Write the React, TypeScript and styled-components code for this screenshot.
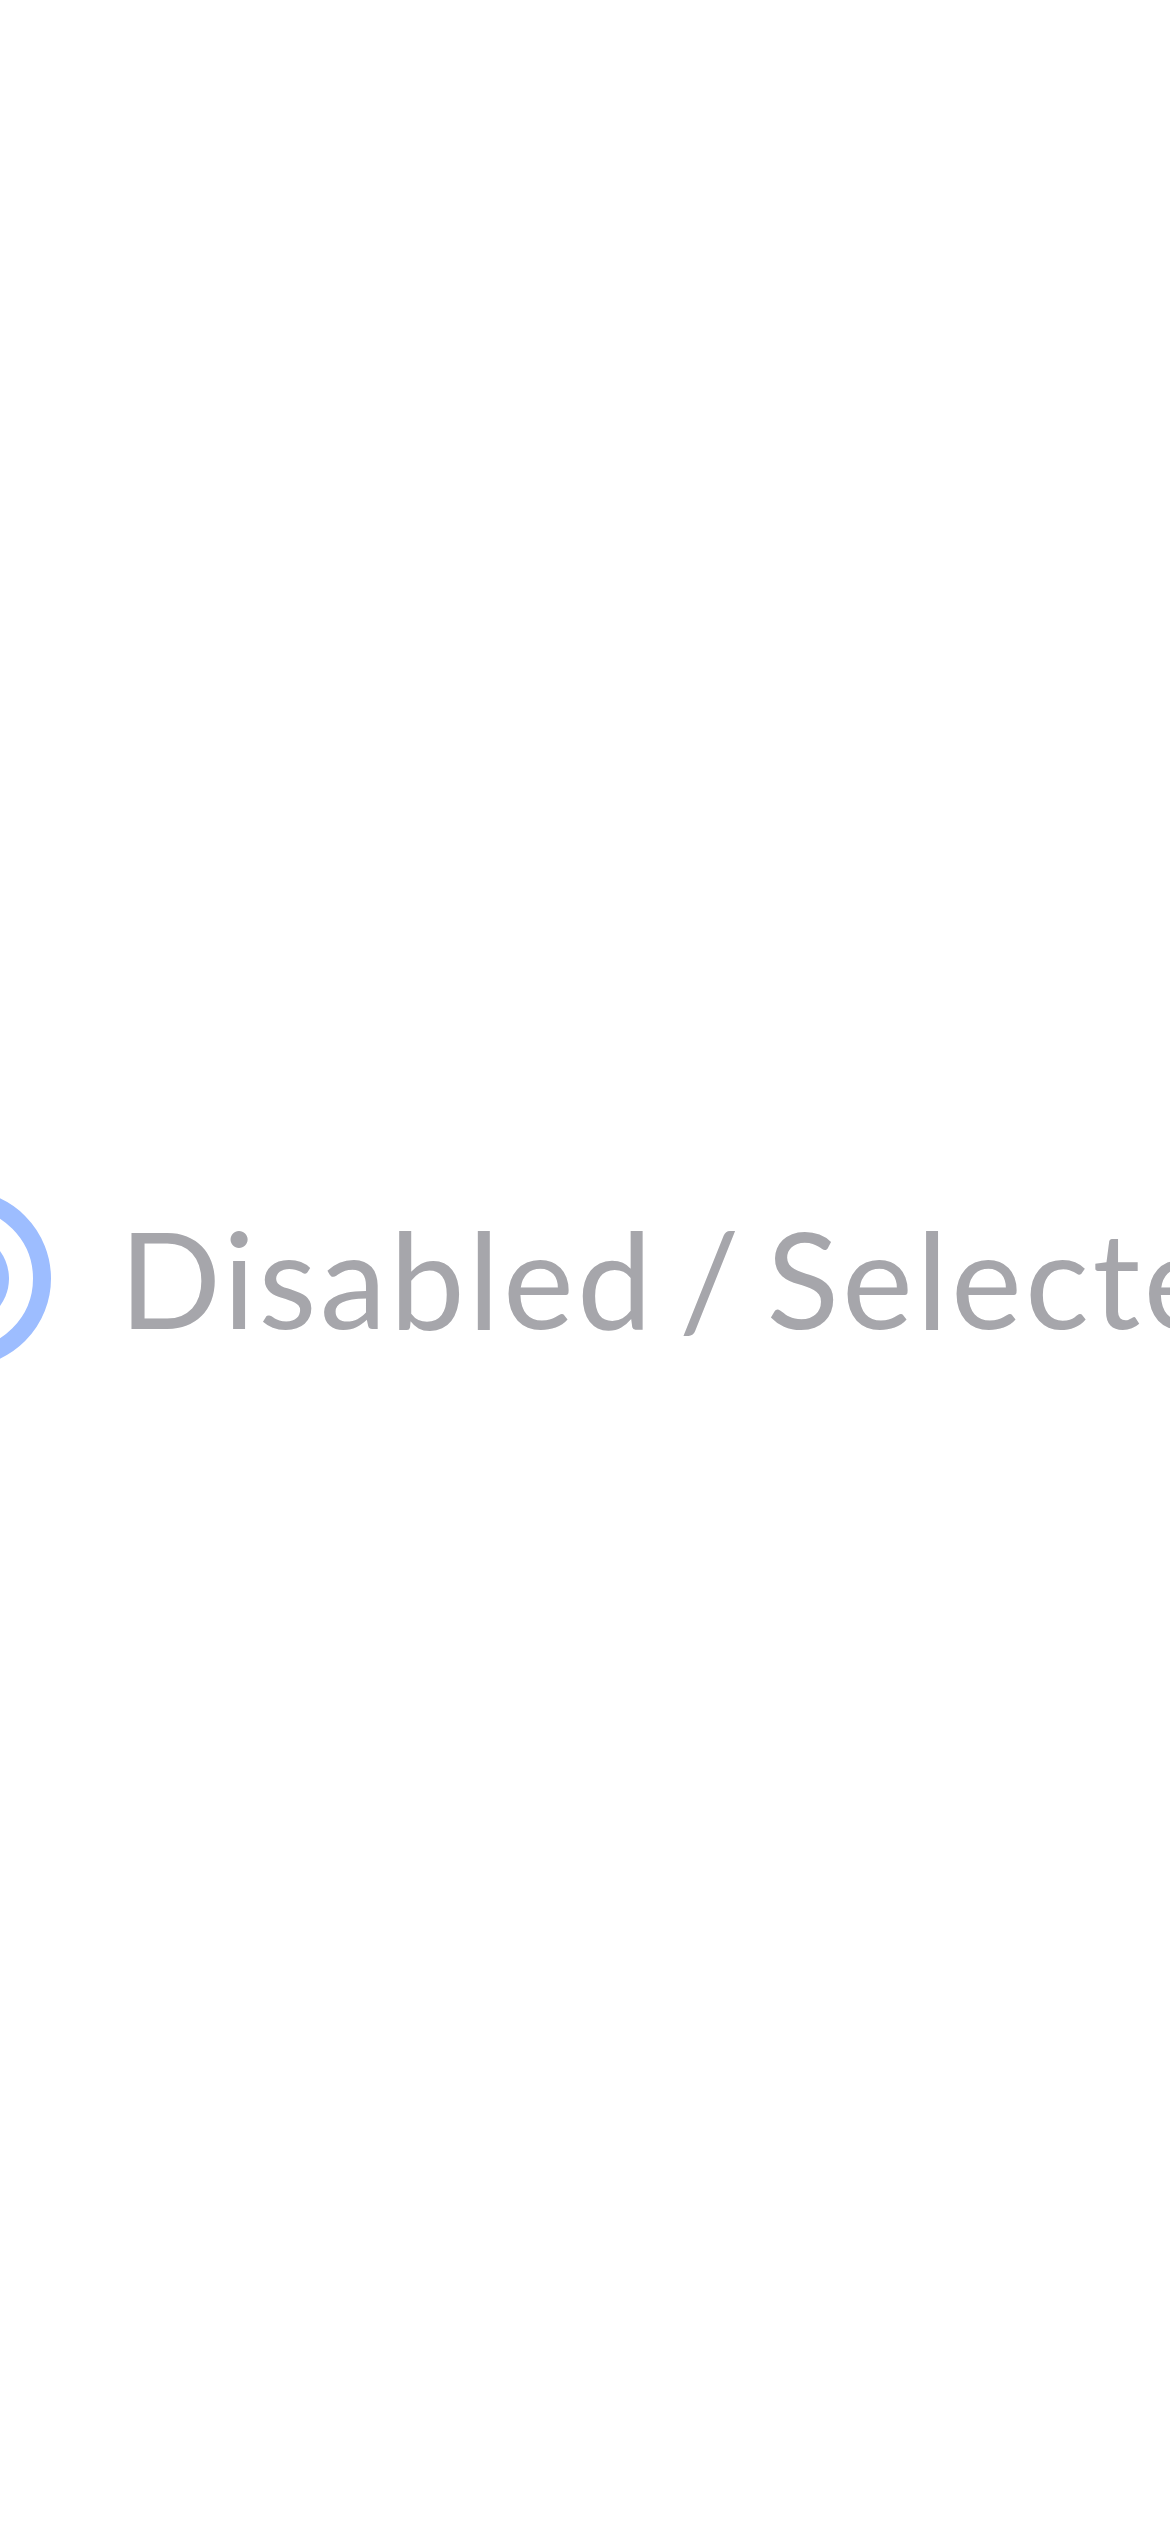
import React from "react";
import styled, { createGlobalStyle } from "styled-components";

const GlobalStyle = createGlobalStyle`
  * { box-sizing: border-box; }
  html, body { margin: 0; padding: 0; background: #ffffff; }
  body { font-family: "Lato", "Noto Sans", sans-serif; overflow: hidden; }
`;

const Page = styled.main`
  width: 100vw;
  height: 100vh;
  padding-top: 24px;
  display: flex;
  align-items: center;
  justify-content: center;
  overflow: hidden;
`;

const Option = styled.label<{ $disabled?: boolean }>`
  flex: none;
  display: flex;
  align-items: center;
  gap: 68px;
  cursor: ${(p) => (p.$disabled ? "not-allowed" : "pointer")};
`;

const Ring = styled.span<{ $checked?: boolean }>`
  flex: none;
  width: 177px;
  height: 177px;
  border-radius: 50%;
  border: 18px solid #9dbdff;
  display: flex;
  align-items: center;
  justify-content: center;
`;

const Dot = styled.span`
  width: 93px;
  height: 93px;
  border-radius: 50%;
  background: #9dbdff;
`;

const Text = styled.span`
  font-family: "Lato", "Noto Sans", sans-serif;
  font-size: 134px;
  line-height: 1.2;
  font-weight: 400;
  letter-spacing: 3.3px;
  word-spacing: -14px;
  color: #a6a6ab;
  white-space: nowrap;
`;

export default function App() {
  return (
    <>
      <GlobalStyle />
      <Page>
        <Option $disabled>
          <Ring $checked>
            <Dot />
          </Ring>
          <Text>Disabled / Selected</Text>
        </Option>
      </Page>
    </>
  );
}
